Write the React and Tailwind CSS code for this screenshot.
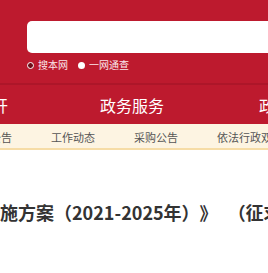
import React from "react";

export default function App() {
  const font = { fontFamily: '"Noto Sans CJK SC", "Noto Sans", sans-serif' };
  return (
    <div className="w-[268px] h-[273px] overflow-hidden bg-white" style={font}>
      <div className="h-[83px] bg-[#bd1a2e] pt-[21px] pl-[27px]">
        <div className="h-[32px] w-[300px] rounded-[5px] bg-white" />
        <div className="mt-[5px] flex items-center h-[14px] text-[10px] leading-none text-[#fbe7ea]">
          <span className="w-[7px] h-[7px] rounded-full border-[1.5px] border-white bg-[#6e0d19]" />
          <span className="ml-[4px]">搜本网</span>
          <span className="ml-[10px] w-[7px] h-[7px] rounded-full bg-white" />
          <span className="ml-[4px]">一网通查</span>
        </div>
      </div>
      <div className="h-[2px] bg-[#ad1629]" />
      <div className="h-[39px] bg-[#bd1a2e] flex items-center whitespace-nowrap text-[16px] leading-none text-white">
        <span className="ml-[-56px] w-[64px] shrink-0">政务公开</span>
        <span className="ml-[92px] w-[64px] shrink-0">政务服务</span>
        <span className="ml-[95px] w-[64px] shrink-0">政民互动</span>
      </div>
      <div className="h-[26px] bg-[#fdf4e2] border-b-[2px] border-[#f6dca6] flex items-center whitespace-nowrap text-[11px] leading-none text-[#555]">
        <span className="ml-[-32px] shrink-0 pt-[3px]">通知公告</span>
        <span className="ml-[39px] shrink-0 pt-[3px]">工作动态</span>
        <span className="ml-[39px] shrink-0 pt-[3px]">采购公告</span>
        <span className="ml-[39px] shrink-0 pt-[3px]">依法行政双随机</span>
      </div>
      <div className="mt-[50px] whitespace-nowrap text-[18px] leading-[24px] font-bold text-[#333] [text-spacing-trim:space-all]">
        施方案（2021-2025年）》<span className="ml-[10px]">（征求意见稿）</span>
      </div>
    </div>
  );
}
